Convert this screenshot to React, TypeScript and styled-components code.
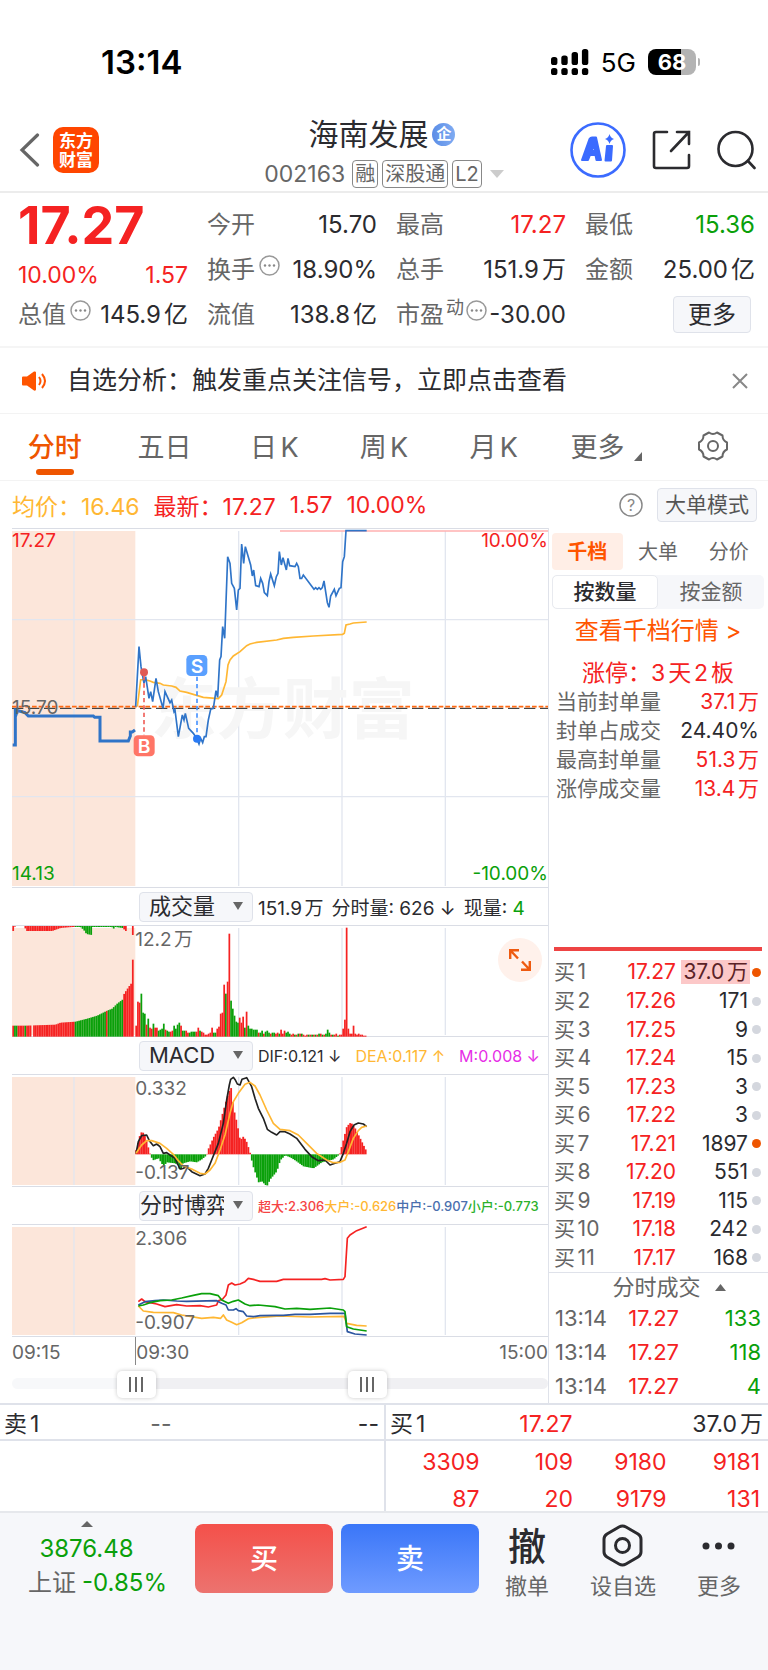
import React, { useState } from "react";
import styled, { createGlobalStyle } from "styled-components";

const C = {
  red: "#f52222",
  green: "#0aa00a",
  dark: "#2b2b2f",
  grey: "#666",
  orange: "#ff5500",
  amber: "#ffb733",
  line: "#dfe2ea",
  panel: "#f6f7fa",
  grid: "#e2e6ef",
  pre: "#fce6da",
  blue: "#2f74c8",
};

const Global = createGlobalStyle`
  *, *::before, *::after { box-sizing: border-box; }
  body {
    margin: 0;
    background: #fff;
    color: ${C.dark};
    font-family: Inter, "Noto Sans CJK SC", sans-serif;
    text-autospace: normal;
  }
  button, select, input { font: inherit; color: inherit; text-autospace: inherit; }
  button { border: 0; padding: 0; margin: 0; background: none; cursor: pointer; }
  a { color: inherit; text-decoration: none; }
  svg { display: block; flex: none; }
  table { border-collapse: collapse; border-spacing: 0; }
  td, th { padding: 0; font-weight: 400; }
`;

/* ---------- status bar and header ---------- */

const StatusBar = styled.div`
  display: flex;
  align-items: center;
  justify-content: space-between;
  height: 108px;
  padding: 16px 68px 0 101px;
`;
const Clock = styled.span`
  font-size: 33px;
  font-weight: 600;
  color: #000;
`;
const StatusRight = styled.div`
  display: flex;
  align-items: center;
  gap: 12px;
  color: #000;
`;
const Network = styled.span`
  font-size: 26px;
`;
const Battery = styled.div`
  display: flex;
  align-items: center;
  gap: 2px;
`;
const BatteryCell = styled.div`
  display: flex;
  align-items: center;
  justify-content: center;
  width: 48px;
  height: 26px;
  border-radius: 8px;
  background: linear-gradient(90deg, #000 68%, #b3b3b3 68%);
  color: #fff;
  font-size: 22px;
  font-weight: 700;
`;
const BatteryTip = styled.i`
  width: 2px;
  height: 8px;
  border-radius: 0 2px 2px 0;
  background: #b3b3b3;
`;

const Header = styled.header`
  display: grid;
  grid-template-columns: 1fr auto 1fr;
  align-items: center;
  height: 85px;
  padding: 0 12px;
  border-bottom: 2px solid #ececec;
`;
const HeaderSide = styled.div<{ $end?: boolean }>`
  display: flex;
  align-items: center;
  justify-content: ${(p) => (p.$end ? "flex-end" : "flex-start")};
  gap: ${(p) => (p.$end ? "26px" : "13px")};
  padding-left: ${(p) => (p.$end ? "0" : "7px")};
`;
const TitleBlock = styled.div`
  display: flex;
  flex-direction: column;
  align-items: center;
  padding-top: 7px;
`;
const TitleRow = styled.h1`
  display: flex;
  align-items: center;
  gap: 4px;
  margin: 0 0 4px;
  padding-right: 4px;
  font-size: 30px;
  line-height: 38px;
  font-weight: 400;
`;
const CompanyBadge = styled.span`
  display: flex;
  align-items: center;
  justify-content: center;
  width: 23px;
  height: 23px;
  border-radius: 50%;
  background: linear-gradient(90deg, #5b8de6, #7fabf2);
  color: #fff;
  font-size: 15px;
  font-weight: 700;
`;
const CodeRow = styled.div`
  display: flex;
  align-items: center;
  gap: 4px;
  height: 34px;
  font-size: 23px;
  color: ${C.grey};
`;
const Code = styled.span`
  margin-right: 3px;
`;
const Tag = styled.span`
  height: 28px;
  padding: 0 2px;
  border: 1px solid #888;
  border-radius: 4px;
  font-size: 20px;
  line-height: 26px;
`;

/* ---------- quote summary ---------- */

const Quote = styled.section`
  display: grid;
  grid-template-columns: repeat(4, minmax(0, 1fr));
  grid-auto-rows: 45px;
  column-gap: 19px;
  padding: 9px 13px 9px 18px;
  border-bottom: 2px solid #f5f5f5;
`;
const PriceCell = styled.div`
  grid-row: span 2;
  display: flex;
  flex-direction: column;
  color: ${C.red};
`;
const LastPrice = styled.strong`
  font-size: 52px;
  line-height: 48px;
  font-weight: 700;
`;
const ChangeRow = styled.div`
  display: flex;
  align-items: center;
  justify-content: space-between;
  height: 42px;
  padding-top: 8px;
  font-size: 23px;
`;
const Cell = styled.div`
  display: flex;
  align-items: center;
  justify-content: space-between;
  font-size: 24px;
  line-height: 32px;
  white-space: nowrap;
`;
const CellLabel = styled.span`
  display: flex;
  align-items: center;
  gap: 4px;
  color: ${C.grey};
`;
const Sup = styled.small`
  align-self: flex-start;
  font-size: 18px;
  line-height: 18px;
  margin: 0 -2px;
`;
const Value = styled.span<{ $color?: string }>`
  color: ${(p) => p.$color ?? C.dark};
`;
const OutlineButton = styled.button<{ $size: number }>`
  height: ${(p) => (p.$size > 22 ? 37 : 34)}px;
  padding: 0 ${(p) => (p.$size > 22 ? 14 : 7)}px;
  border: 1px solid #dfe2ea;
  border-radius: 4px;
  background: ${C.panel};
  color: ${(p) => (p.$size > 22 ? C.dark : "#555")};
  font-size: ${(p) => p.$size}px;
  line-height: 30px;
  white-space: nowrap;
`;
const MoreCell = styled(Cell)`
  justify-content: flex-end;
  padding-right: 4px;
`;

/* ---------- notice, tabs, info row ---------- */

const Notice = styled.section`
  display: flex;
  align-items: center;
  gap: 20px;
  height: 66px;
  padding: 0 20px 0 22px;
  border-bottom: 1px solid #f3f3f3;
  font-size: 25px;
`;
const NoticeText = styled.span`
  flex: 1;
  min-width: 0;
  padding-bottom: 5px;
`;
const Tabs = styled.nav`
  display: grid;
  grid-template-columns: repeat(7, 1fr);
  height: 67px;
  border-bottom: 1px solid #f3f3f3;
`;
const Tab = styled.button<{ $on?: boolean }>`
  position: relative;
  display: flex;
  align-items: center;
  justify-content: center;
  gap: 10px;
  padding-bottom: 3px;
  color: ${(p) => (p.$on ? "#ee5500" : C.grey)};
  font-size: 27px;
  font-weight: ${(p) => (p.$on ? 500 : 400)};
  white-space: nowrap;
  &::after {
    content: "";
    display: ${(p) => (p.$on ? "block" : "none")};
    position: absolute;
    left: calc(50% - 19px);
    bottom: 5px;
    width: 38px;
    height: 6px;
    border-radius: 3px;
    background: #ee5500;
  }
`;
const MoreTab = styled(Tab)`
  padding-left: 6px;
`;
const TabCorner = styled.i`
  align-self: flex-end;
  margin-bottom: 16px;
  border-left: 8px solid transparent;
  border-bottom: 9px solid ${C.grey};
`;
const InfoRow = styled.div`
  display: flex;
  align-items: center;
  gap: 14px;
  height: 47px;
  margin: 0 11px 0 12px;
  font-size: 23px;
  color: ${C.red};
  white-space: nowrap;
`;
const InfoPair = styled.span<{ $color: string }>`
  color: ${(p) => p.$color};
`;
const Spacer = styled.span`
  flex: 1;
`;

/* ---------- charts ---------- */

const Main = styled.main`
  display: grid;
  grid-template-columns: minmax(0, 1fr) 219px;
`;
const Charts = styled.section`
  padding-left: 12px;
  border-right: 1px solid ${C.line};
`;
const Plot = styled.div`
  position: relative;
`;
const PlotSvg = styled.svg`
  width: 100%;
  height: auto;
`;
const PlotLabel = styled.span<{ $side: "left" | "right" | "open"; $top: string; $color?: string }>`
  position: absolute;
  top: ${(p) => p.$top};
  ${(p) => (p.$side === "right" ? "right: 0" : p.$side === "open" ? "left: 23%" : "left: 0")};
  color: ${(p) => p.$color ?? C.grey};
  font-size: 19px;
  line-height: 22px;
`;
const Legend = styled.div`
  display: flex;
  align-items: center;
  gap: 5px;
  height: 37px;
  padding-left: 127px;
  white-space: nowrap;
  overflow: hidden;
`;
const LegendText = styled.span<{ $size: number; $gap: number }>`
  display: flex;
  gap: ${(p) => p.$gap}px;
  font-size: ${(p) => p.$size}px;
  font-weight: ${(p) => (p.$size < 14 ? 500 : 400)};
`;
const SelectBox = styled.label`
  position: relative;
  flex: none;
  width: 114px;
  height: 30px;
  svg {
    position: absolute;
    right: 10px;
    top: 10px;
    pointer-events: none;
  }
`;
const Select = styled.select`
  appearance: none;
  width: 100%;
  height: 100%;
  padding: 0 28px 2px 0;
  border: 1px solid ${C.line};
  border-radius: 4px;
  background: ${C.panel};
  font-size: 22px;
  line-height: 26px;
  text-align: center;
  text-align-last: center;
`;
const ExpandButton = styled.button`
  position: absolute;
  right: 6px;
  top: 13px;
  display: flex;
  align-items: center;
  justify-content: center;
  width: 44px;
  height: 44px;
  border-radius: 50%;
  background: #fff1eb;
`;
const TimeAxis = styled.div`
  display: flex;
  height: 28px;
  color: ${C.grey};
  font-size: 19px;
  line-height: 31px;
`;
const TimeStart = styled.span`
  width: 23%;
`;
const TimeOpen = styled.span`
  flex: 1;
  border-left: 1px solid #888;
`;
const RangeBox = styled.div`
  position: relative;
  height: 38px;
  &::before {
    content: "";
    position: absolute;
    inset: 13px 0 14px;
    border-radius: 6px;
    background: linear-gradient(90deg, #f7f8fa 23%, #f0f0f3 23%);
  }
`;
const RangeInput = styled.input`
  appearance: none;
  position: absolute;
  inset: 5px 0 5px;
  width: 100%;
  height: 28px;
  margin: 0;
  background: transparent;
  pointer-events: none;
  &::-webkit-slider-thumb {
    appearance: none;
    pointer-events: auto;
    width: 39px;
    height: 27px;
    border: 0;
    border-radius: 5px;
    box-shadow: 0 0 4px rgba(0, 0, 0, 0.22);
    background:
      linear-gradient(#666, #666) 12px 6px / 2px 15px no-repeat,
      linear-gradient(#666, #666) 18px 6px / 2px 15px no-repeat,
      linear-gradient(#666, #666) 24px 6px / 2px 15px no-repeat,
      #fff;
  }
`;

/* ---------- order book side ---------- */

const Side = styled.aside`
  display: flex;
  flex-direction: column;
  min-width: 0;
`;
const SideTop = styled.div`
  height: 419px;
  padding: 5px 4px 0 3px;
`;
const SideTabs = styled.div`
  display: grid;
  grid-template-columns: repeat(3, 1fr);
  height: 37px;
`;
const SideTab = styled.button<{ $on?: boolean }>`
  padding-bottom: 2px;
  border-radius: 4px;
  background: ${(p) => (p.$on ? "#ffeee6" : "transparent")};
  color: ${(p) => (p.$on ? C.orange : C.grey)};
  font-size: 20px;
  font-weight: ${(p) => (p.$on ? 700 : 400)};
`;
const Segments = styled.div`
  display: grid;
  grid-template-columns: 1fr 1fr;
  height: 34px;
  margin-top: 5px;
  border-radius: 5px;
  background: ${C.panel};
`;
const Segment = styled.button<{ $on?: boolean }>`
  border: 1px solid ${(p) => (p.$on ? "#e8eaef" : "transparent")};
  border-radius: 5px;
  background: ${(p) => (p.$on ? "#fff" : "transparent")};
  color: ${(p) => (p.$on ? C.dark : C.grey)};
  font-size: 21px;
  line-height: 30px;
  font-weight: ${(p) => (p.$on ? 500 : 400)};
`;
const DepthLink = styled.a`
  display: block;
  height: 44px;
  color: ${C.orange};
  font-size: 24px;
  line-height: 44px;
  text-align: center;
`;
const LimitTitle = styled.div`
  height: 33px;
  margin-top: 3px;
  color: ${C.red};
  font-size: 23px;
  line-height: 35px;
  text-align: center;
`;
const StatRow = styled.div`
  display: flex;
  justify-content: space-between;
  height: 29px;
  padding: 0 5px 0 4px;
  font-size: 21px;
  line-height: 26px;
  color: ${C.grey};
  white-space: nowrap;
`;
const BookTable = styled.table`
  width: 208px;
  height: 325px;
  margin-left: 5px;
  border-top: 4px solid #ee4444;
  font-size: 21px;
  line-height: 24px;
  table-layout: fixed;
  tr:first-child > * {
    padding-top: 6px;
  }
`;
const BookLevel = styled.th`
  width: 56px;
  text-align: left;
  color: ${C.grey};
`;
const BookPrice = styled.td`
  width: 66px;
  text-align: right;
  color: ${C.red};
`;
const BookVolume = styled.td`
  text-align: right;
`;
const Highlight = styled.span<{ $on: boolean }>`
  display: inline-block;
  height: 24px;
  padding: 0 2px;
  background: ${(p) => (p.$on ? "#fcc8c8" : "transparent")};
  color: ${(p) => (p.$on ? "#5a2226" : C.dark)};
  white-space: nowrap;
`;
const DotCell = styled.td`
  width: 12px;
`;
const Dot = styled.i<{ $on: boolean }>`
  display: block;
  width: 9px;
  height: 9px;
  margin-left: 2px;
  border-radius: 50%;
  background: ${(p) => (p.$on ? "#ee5500" : "#d4d7de")};
`;
const Deals = styled.div`
  padding: 0 7px 0 6px;
  border-top: 1px solid ${C.line};
`;
const DealsHead = styled.button`
  display: flex;
  align-items: center;
  justify-content: center;
  gap: 14px;
  width: 100%;
  height: 28px;
  padding-left: 22px;
  color: ${C.grey};
  font-size: 22px;
  line-height: 28px;
`;
const DealRow = styled.div`
  display: grid;
  grid-template-columns: 56px 68px 1fr;
  height: 34px;
  font-size: 22px;
  line-height: 34px;
  text-align: right;
`;
const DealTime = styled.span`
  color: ${C.grey};
  text-align: left;
`;

/* ---------- queue strip ---------- */

const Queue = styled.section`
  display: grid;
  grid-template-columns: 1fr 1fr;
  border-top: 2px solid ${C.line};
  border-bottom: 2px solid #e6e8ec;
  font-size: 23px;
`;
const QueueSide = styled.div<{ $right?: boolean }>`
  border-left: ${(p) => (p.$right ? `2px solid ${C.line}` : "0")};
`;
const QueueHead = styled.div`
  display: grid;
  grid-template-columns: 1fr 1fr 2fr;
  height: 36px;
  padding: 0 5px 0 4px;
  border-bottom: 2px solid ${C.line};
  line-height: 38px;
  white-space: nowrap;
`;
const QueueItem = styled.span<{ $align?: "left"; $color?: string; $inset?: number }>`
  padding-right: ${(p) => p.$inset ?? 0}px;
  text-align: ${(p) => p.$align ?? "right"};
  color: ${(p) => p.$color ?? C.dark};
`;
const QueueGrid = styled.div`
  display: grid;
  grid-template-columns: repeat(4, 1fr);
  grid-auto-rows: 24px;
  row-gap: 13px;
  padding: 9px 8px 0 0;
  color: ${C.red};
  line-height: 24px;
  text-align: right;
`;

/* ---------- bottom bar ---------- */

const BottomBar = styled.footer`
  display: grid;
  grid-template-columns: 187px 138px 138px 1fr;
  column-gap: 8px;
  height: 158px;
  padding-top: 11px;
  background: ${C.panel};
`;
const IndexBox = styled.button`
  display: flex;
  flex-direction: column;
  align-items: center;
  justify-self: stretch;
  height: 80px;
  padding-left: 8px;
  margin-top: -3px;
  color: ${C.green};
  font-size: 24px;
  line-height: 34px;
`;
const IndexArrow = styled.i`
  margin: 0 22px 5px 0;
  border: 6px solid transparent;
  border-top: 0;
  border-bottom: 6px solid ${C.grey};
`;
const IndexValue = styled.span`
  margin-right: 22px;
`;
const IndexName = styled.span`
  color: ${C.grey};
  margin-right: 6px;
`;
const TradeButton = styled.button<{ $buy?: boolean }>`
  height: 69px;
  padding-bottom: 3px;
  border-radius: 8px;
  background: ${(p) =>
    p.$buy ? "linear-gradient(#f4504a, #ec736f)" : "linear-gradient(#3a76f8, #6f9bff)"};
  color: #fff;
  font-size: 28px;
  font-weight: 500;
`;
const Actions = styled.div`
  display: flex;
  justify-content: space-between;
  padding: 0 27px 0 18px;
`;
const Action = styled.button`
  display: flex;
  flex-direction: column;
  align-items: center;
  gap: 4px;
  height: 80px;
  font-size: 22px;
  line-height: 30px;
  color: ${C.grey};
`;
const ActionIcon = styled.span`
  display: flex;
  align-items: center;
  height: 43px;
  font-size: 38px;
  font-weight: 500;
  line-height: 38px;
  color: ${C.dark};
`;

/* ---------- icons ---------- */

const SignalIcon = () => (
  <svg width="38" height="26" viewBox="0 0 38 26" fill="#000">
    {[8, 6.5, 3, 0].map((y, i) => (
      <g key={y}>
        <rect x={i * 10.3} y={y} width="6.400" height={16 - y} rx="2.600" />
        <rect x={i * 10.3} y="19" width="6.400" height="7" rx="2.600" />
      </g>
    ))}
  </svg>
);
const BackIcon = () => (
  <svg width="21" height="34" viewBox="0 0 21 34" fill="none" stroke="#666" strokeWidth="3.200" strokeLinecap="round">
    <path d="M18.500 2 3 17l15.500 15" />
  </svg>
);
const BrandIcon = () => (
  <svg width="46" height="46" viewBox="0 0 46 46">
    <rect width="46" height="46" rx="10" fill="#ff4600" />
    <g fill="#fff" fontSize="17" fontWeight="700" textAnchor="middle">
      <text x="23" y="20">东方</text>
      <text x="23" y="39">财富</text>
    </g>
  </svg>
);
const AiIcon = () => (
  <svg width="56" height="56" viewBox="0 0 56 56" fill="#3b6bff">
    <circle cx="28" cy="28" r="26.500" fill="#fff" stroke="#3b6bff" strokeWidth="2.600" />
    <g stroke="#3b6bff" strokeWidth="2" strokeLinejoin="round">
      <path
        fillRule="evenodd"
        d="M12 38 19.500 17q1-1.500 2.500-1.500h4L31 38h-4.500l-1-5h-5.500l-2 5zM21.500 29h3.500l-1-6z"
      />
      <path d="M37 24h5l-1 14.500h-5.500z" />
    </g>
    <path d="M39.500 12q1 4 4.500 5-3.500 1-4.500 5-1-4-4.500-5 3.500-1 4.500-5z" />
  </svg>
);
const ShareIcon = () => (
  <svg width="39" height="40" viewBox="0 0 39 40" fill="none" stroke="#2b2b2f" strokeWidth="2.600" strokeLinecap="round">
    <path d="M15 2H4q-2 0-2 2v32q0 2 2 2h31q2 0 2-2V25M25 2h12v12M37 2 19 21" />
  </svg>
);
const SearchIcon = () => (
  <svg width="39" height="40" viewBox="0 0 39 40" fill="none" stroke="#2b2b2f" strokeWidth="2.600" strokeLinecap="round">
    <circle cx="18.500" cy="19" r="17" />
    <path d="m31 31 6.500 7" />
  </svg>
);
const InfoDots = () => (
  <svg width="21" height="30" viewBox="0 0 21 30">
    <circle cx="10.500" cy="10.500" r="9.500" fill="none" stroke="#999" strokeWidth="1.500" />
    <g fill="#888">
      <circle cx="6" cy="10.500" r="1.200" />
      <circle cx="10.500" cy="10.500" r="1.200" />
      <circle cx="15" cy="10.500" r="1.200" />
    </g>
  </svg>
);
const SpeakerIcon = () => (
  <svg width="25" height="20" viewBox="0 0 25 20">
    <path d="M1 5.500h4L12 .5q2-.5 2 1v17q0 1.500-2 1l-7-5H1q-1 0-1-1v-7q0-1 1-1z" fill={C.orange} />
    <path d="M17 6q3 4 0 8M20 3q6 7 0 14" fill="none" stroke={C.orange} strokeWidth="2" />
  </svg>
);
const CloseIcon = () => (
  <svg width="16" height="16" viewBox="0 0 16 16" stroke="#888" strokeWidth="2">
    <path d="m1 1 14 14M15 1 1 15" />
  </svg>
);
const GearIcon = () => (
  <svg width="32" height="30" viewBox="0 0 32 30" fill="none" stroke="#666" strokeWidth="2" strokeLinejoin="round">
    <path d="M12 1.500q4 3 8 0l5.500 3q0 5 4.500 7v7q-4.500 2-4.500 7l-5.500 3q-4-3-8 0l-5.500-3q0-5-4.500-7v-7q4.500-2 4.500-7z" />
    <circle cx="16" cy="15" r="5" />
  </svg>
);
const HelpIcon = () => (
  <svg width="24" height="24" viewBox="0 0 24 24">
    <circle cx="12" cy="12" r="11" fill="none" stroke="#888" strokeWidth="1.500" />
    <text x="12" y="18" fill="#888" fontSize="16" textAnchor="middle">?</text>
  </svg>
);
const DownIcon = ({ color = "#666", w = 10 }: { color?: string; w?: number }) => (
  <svg width={w} height="8" viewBox="0 0 10 8" preserveAspectRatio="none" fill={color}>
    <path d="M0 0h10L5 8z" />
  </svg>
);
const UpIcon = () => (
  <svg width="11" height="7" viewBox="0 0 11 7" fill="#666">
    <path d="M0 7h11L5.500 0z" />
  </svg>
);
const ExpandIcon = () => (
  <svg width="22" height="22" viewBox="0 0 22 22" fill="none" stroke="#ee5a10" strokeWidth="2.400">
    <path d="M1.200 10V1.200H10M1.500 1.500l7.500 8M12 20.800h8.800V12M20.500 20.500l-7.500-8" />
  </svg>
);
const HexIcon = () => (
  <svg width="41" height="43" viewBox="0 0 41 43" fill="none" stroke="#2b2b2f" strokeWidth="3">
    <path d="M17 3q3.500-2 7 0l12 7q3 2 3 5v13q0 3-3 5l-12 7q-3.500 2-7 0L5 33q-3-2-3-5V15q0-3 3-5z" />
    <circle cx="20.500" cy="21.500" r="7" />
  </svg>
);
const DotsIcon = () => (
  <svg width="33" height="8" viewBox="0 0 33 8" fill="#2b2b2f">
    <circle cx="4" cy="4" r="3.500" />
    <circle cx="16.500" cy="4" r="3.500" />
    <circle cx="29" cy="4" r="3.500" />
  </svg>
);

/* ---------- chart data (three drawing units per pixel) ---------- */

const LEFT = 36;
const WIDTH = 1608;
const OPEN = 406;
const STEP = 5.175;
const GRID_X = [222, 716, 1026, 1336];

const PRE_PRICE =
  "38,675 46,675 46,565 46,590 52,572 75,578 85,588 280,588 284,592 300,592 300,663 385,663 391,648 391,636 397,636 405,630";
const PRICE =
  "407,560 417,380 423,440 432,490 437,470 447,535 452,515 458,545 468,475 475,515 489,565 495,515 510,548 515,540 522,575 525,570 535,650 547,585 552,600 556,580 566,625 580,640 590,655 597,672 602,655 608,668 613,650 618,650 625,600 632,568 640,565 648,512 653,532 659,420 663,410 668,320 674,355 683,110 690,130 695,190 703,205 710,270 715,210 720,205 725,72 731,130 736,80 752,135 757,168 761,150 767,197 777,200 782,175 788,190 793,218 802,227 807,185 812,162 823,197 829,170 834,160 838,95 844,135 849,113 859,150 864,115 869,137 885,140 890,130 895,140 900,175 905,175 910,165 942,208 947,203 952,208 957,203 962,208 967,203 972,183 982,248 987,262 992,228 1003,208 1008,227 1018,205 1023,203 1028,125 1033,110 1038,32 1100,32";
const AVERAGE =
  "412,560 422,480 432,478 450,483 460,487 480,490 490,495 515,498 528,502 540,513 560,517 590,526 610,532 655,536 665,525 678,485 684,435 690,420 700,408 720,395 740,377 750,372 770,367 830,360 850,355 880,352 940,348 1028,343 1033,340 1038,315 1050,312 1060,309 1100,306";

/* Minute volumes; a minus sign marks a falling minute. */
const VOLUME: number[] = [
  11, 35, 34, -43, -24, -23, 12, -18, 9, 8, -13, 9, 9, -6, -7, -8, -13, 7, -6, -5, 5, 6, -11, -8, -12, -14, 11, -6, -6,
  6, 4, -4, -5, -5, -5, 5, 9, -6, 5, 4, 2, 2, 3, 4, 9, -4, -4, 8, 10, 23, 24, 52, -43, 55, 103, -36, -28, -21, -15, -14,
  19, 14, 20, -9, 25, -11, -8, -8, -7, -7, -7, 4, -4, -6, 3, -5, -6, -4, 3, -4, -4, 3, 4, -3, 7, 3, 6, -4, -5, -3, 2, 3,
  -2, 2, -3, 3, -3, 2, 1, 2, -2, 2, -2, 2, -2, 2, -3, 3, -2, 2, -3, -7, -4, 2, -2, 2, 3, -1, 2, 2, 8, 17, 109, 8, 3,
  3, 11, 3, 2, 3, 2, 2, 1, 1,
];

type Key = [number, number];
/* Reads a value at x from a list of key points by straight lines. */
const at = (keys: Key[], x: number): number => {
  const i = keys.findIndex((k) => k[0] >= x);
  if (i <= 0) return keys[i === 0 ? 0 : keys.length - 1][1];
  const [x0, y0] = keys[i - 1];
  const [x1, y1] = keys[i];
  return y0 + ((y1 - y0) * (x - x0)) / (x1 - x0);
};
const PRE_VOLUME: Key[] = [
  [38, 11], [75, 11], [165, 12], [180, 14], [225, 15], [260, 18], [290, 21], [320, 26], [335, 28], [350, 33], [366, 37],
  [371, 43], [385, 50], [394, 54], [396, 77],
];
const PRE_TOP: Key[] = [
  [38, 5], [44, 0], [72, 0], [77, 5], [155, 5], [180, 2], [218, 1], [240, 1], [250, 4], [258, 8], [274, 9], [276, 1],
  [334, 1], [338, 3], [345, 1], [366, 2], [376, 5], [381, 0], [392, 0], [396, 9],
];
const HISTOGRAM: Key[] = [
  [407, 3], [418, 18], [425, 23], [433, 20], [440, 12], [450, 0], [458, -6], [475, -4], [490, -12], [500, -8],
  [525, -9], [535, -11], [540, -18], [548, -9], [570, -7], [590, -8], [605, -5], [619, -1], [624, 5], [640, 17],
  [655, 26], [668, 42], [680, 56], [692, 68], [700, 46], [710, 32], [720, 14], [730, 18], [740, 12], [751, 0],
  [757, -10], [775, -28], [785, -27], [800, -32], [810, -25], [830, -17], [840, -6], [855, -1], [870, -3], [885, -6],
  [910, -12], [940, -14], [965, -8], [1000, -5], [1018, 0], [1030, 15], [1040, 28], [1052, 32], [1065, 26], [1080, 16],
  [1102, 1],
];

const DIF =
  "408,820 415,785 425,767 440,765 448,782 460,797 470,792 480,800 490,820 500,818 510,825 525,835 540,867 550,865 560,860 575,875 600,887 615,882 625,865 635,840 655,790 670,730 680,660 688,615 692,598 700,592 706,600 712,612 720,615 726,598 740,593 748,607 755,620 765,655 775,685 790,715 802,748 815,757 830,765 840,755 855,755 870,762 890,775 915,808 935,830 955,842 975,840 990,855 1005,850 1020,845 1030,820 1040,790 1050,755 1062,735 1075,729 1090,732 1100,740";
const DEA =
  "408,820 425,795 440,782 455,782 480,790 500,805 520,823 535,842 550,858 575,867 600,880 615,882 630,870 645,850 660,810 675,765 690,700 700,665 715,640 735,613 750,607 765,618 780,645 800,690 820,730 840,748 870,752 895,765 920,790 950,820 980,840 1000,848 1020,847 1035,840 1045,815 1060,775 1075,752 1085,742 1100,738";

const PLAYERS: [string, string][] = [
  [
    "#f52222",
    "415,365 425,357 435,365 450,368 470,372 495,380 530,374 560,378 600,377 625,381 650,375 655,362 668,357 678,345 685,315 695,309 705,315 720,312 735,305 745,295 760,298 780,304 830,304 850,298 965,298 975,296 990,300 1030,298 1035,290 1038,240 1042,175 1050,165 1070,152 1100,140",
  ],
  [
    "#ffb733",
    "415,378 430,393 460,397 520,398 545,405 605,415 640,412 662,415 670,405 680,420 695,427 710,434 725,428 745,416 770,413 840,408 930,411 1032,409 1040,430 1070,436 1100,438",
  ],
  [
    "#2c56a0",
    "415,375 435,365 465,362 490,360 530,363 560,364 650,362 665,370 678,375 685,390 700,390 708,386 715,392 730,395 740,408 760,410 780,407 830,406 850,406 885,403 930,403 990,400 1035,400 1042,455 1065,462 1100,465",
  ],
  [
    "#0aa00a",
    "415,378 430,375 450,368 480,362 515,360 545,354 580,346 605,341 630,341 655,347 665,360 685,370 700,364 715,360 735,372 750,377 775,375 825,380 855,387 890,385 930,388 990,384 1030,390 1035,395 1040,440 1060,447 1100,453",
  ],
];

interface FrameProps {
  top: number;
  height: number;
  children: React.ReactNode;
  rows?: number[];
}
/* Shared backdrop: pre-open shading, grid and the outer rules. */
const Frame = ({ top, height, rows = [], children }: FrameProps) => (
  <PlotSvg viewBox={`${LEFT} ${top} ${WIDTH} ${height}`}>
    <rect x={LEFT} y={top + 9} width={OPEN - LEFT} height={height - 15} fill={C.pre} />
    <g stroke={C.grid} strokeWidth="4">
      {GRID_X.map((x) => (
        <path key={x} d={`M${x} ${top + 9}v${height - 15}`} />
      ))}
      {rows.map((y) => (
        <path key={y} d={`M${LEFT} ${y}h${WIDTH}`} />
      ))}
    </g>
    <path
      d={`M${LEFT} ${top + 1.5}h${WIDTH}M${LEFT} ${top + height - 1.5}h${WIDTH}`}
      stroke="#dadde5"
      strokeWidth="3"
    />
    {children}
  </PlotSvg>
);

const PriceChart = () => (
  <Plot>
    <Frame top={24} height={1080} rows={[299, 830]}>
      <text
        x="848"
        y="638"
        fill="#f6f6f6"
        fontSize="198"
        fontWeight="700"
        textAnchor="middle"
        fontFamily='"Noto Sans CJK SC", sans-serif'
      >
        东方财富
      </text>
      <path d="M840 33H1644" stroke="#ffb0b0" strokeWidth="4" />
      <path d="M36 565H1644" stroke="#444" strokeWidth="4" strokeDasharray="34 14" />
      <path d="M36 560H1644" stroke="#ff6a13" strokeWidth="5" strokeDasharray="14 6" />
      <polyline points={PRE_PRICE} fill="none" stroke={C.blue} strokeWidth="9" />
      <polyline points={AVERAGE} fill="none" stroke={C.amber} strokeWidth="5" />
      <polyline points={PRICE} fill="none" stroke={C.blue} strokeWidth="5" />
      <g strokeWidth="5" strokeDasharray="13 9">
        <path d="M432 468V646" stroke="#f0625c" />
        <path d="M591 470V646" stroke="#4a94ff" />
      </g>
      <circle cx="432" cy="457" r="12" fill="#e05a55" />
      <circle cx="591" cy="656" r="12" fill="#2a7bf5" />
      <rect x="401" y="646" width="63" height="63" rx="13" fill="#ff7566" />
      <rect x="559" y="405" width="63" height="63" rx="13" fill="#5aa0ff" />
      <g fill="#fff" fontSize="58" fontWeight="600" textAnchor="middle">
        <text x="432" y="699">B</text>
        <text x="591" y="458">S</text>
      </g>
    </Frame>
    <PlotLabel $side="left" $top="2px" $color={C.red}>17.27</PlotLabel>
    <PlotLabel $side="right" $top="2px" $color={C.red}>10.00%</PlotLabel>
    <PlotLabel $side="left" $top="47%">15.70</PlotLabel>
    <PlotLabel $side="left" $top="93%" $color={C.green}>14.13</PlotLabel>
    <PlotLabel $side="right" $top="93%" $color={C.green}>-10.00%</PlotLabel>
  </Plot>
);

const preBars = Array.from({ length: 70 }, (_, i) => 38 + i * 5.2);
const isFallingPre = (x: number, i: number) => (x > 225 && x < 368 && Math.abs(x - 317) > 2.6) || [1, 2, 7].includes(i);

const VolumeChart = () => (
  <Plot>
    <Frame top={135} height={336}>
      {preBars.map((x, i) => {
        const h = at(PRE_VOLUME, x) * 3;
        const t = at(PRE_TOP, x) * 3;
        const topFalling = x > 225 && x < 368;
        return (
          <g key={x}>
            {Math.abs(x - 95) > 2.6 && (
              <rect x={x - 1} y={470 - h} width="5.200" height={h} fill={isFallingPre(x, i) ? C.green : C.red} />
            )}
            <rect x={x - 1} y="138" width="5.200" height={t} fill={topFalling ? C.green : C.red} />
          </g>
        );
      })}
      {VOLUME.map((v, i) => (
        <rect
          key={i}
          x={OPEN + i * STEP}
          y={470 - Math.abs(v) * 3}
          width={STEP}
          height={Math.abs(v) * 3}
          fill={v > 0 ? C.red : C.green}
        />
      ))}
    </Frame>
    <PlotLabel $side="open" $top="4px">12.2万</PlotLabel>
    <ExpandButton aria-label="全屏">
      <ExpandIcon />
    </ExpandButton>
  </Plot>
);

const MacdChart = () => (
  <Plot>
    <Frame top={582} height={339}>
      {VOLUME.map((_, i) => {
        const x = OPEN + i * STEP;
        const v = at(HISTOGRAM, x + 2) * 3;
        return (
          <rect
            key={i}
            x={x}
            y={v > 0 ? 823 - v : 823}
            width="5.500"
            height={Math.max(Math.abs(v), 1)}
            fill={v > 0 ? C.red : C.green}
          />
        );
      })}
      <polyline points={DIF} fill="none" stroke="#222" strokeWidth="5" strokeLinejoin="round" />
      <polyline points={DEA} fill="none" stroke={C.amber} strokeWidth="5" strokeLinejoin="round" />
    </Frame>
    <PlotLabel $side="open" $top="4px">0.332</PlotLabel>
    <PlotLabel $side="open" $top="88px">-0.137</PlotLabel>
  </Plot>
);

const PlayersChart = () => (
  <Plot>
    <Frame top={132} height={339}>
      {PLAYERS.map(([color, points]) => (
        <polyline key={color} points={points} fill="none" stroke={color} strokeWidth="5" strokeLinejoin="round" />
      ))}
    </Frame>
    <PlotLabel $side="open" $top="4px">2.306</PlotLabel>
    <PlotLabel $side="open" $top="88px">-0.907</PlotLabel>
  </Plot>
);

const IndicatorSelect = ({ value }: { value: string }) => (
  <SelectBox>
    <Select aria-label="指标" defaultValue={value}>
      <option>{value}</option>
    </Select>
    <DownIcon />
  </SelectBox>
);

const BOOK: [string, string, string, boolean][] = [
  ["买1", "17.27", "37.0万", true],
  ["买2", "17.26", "171", false],
  ["买3", "17.25", "9", false],
  ["买4", "17.24", "15", false],
  ["买5", "17.23", "3", false],
  ["买6", "17.22", "3", false],
  ["买7", "17.21", "1897", true],
  ["买8", "17.20", "551", false],
  ["买9", "17.19", "115", false],
  ["买10", "17.18", "242", false],
  ["买11", "17.17", "168", false],
];

const STATS: [string, string, string][] = [
  ["当前封单量", "37.1万", C.red],
  ["封单占成交", "24.40%", C.dark],
  ["最高封单量", "51.3万", C.red],
  ["涨停成交量", "13.4万", C.red],
];

const TABS = ["分时", "五日", "日K", "周K", "月K"];

export default function App() {
  const [tab, setTab] = useState("分时");
  return (
    <>
      <Global />
      <StatusBar>
        <Clock>13:14</Clock>
        <StatusRight>
          <SignalIcon />
          <Network>5G</Network>
          <Battery>
            <BatteryCell>68</BatteryCell>
            <BatteryTip />
          </Battery>
        </StatusRight>
      </StatusBar>

      <Header>
        <HeaderSide>
          <button aria-label="返回"><BackIcon /></button>
          <a href="#home" aria-label="东方财富"><BrandIcon /></a>
        </HeaderSide>
        <TitleBlock>
          <TitleRow>
            海南发展
            <CompanyBadge>企</CompanyBadge>
          </TitleRow>
          <CodeRow>
            <Code>002163</Code>
            <Tag>融</Tag>
            <Tag>深股通</Tag>
            <Tag>L2</Tag>
            <Spacer />
            <DownIcon color="#ccc" w={14} />
          </CodeRow>
        </TitleBlock>
        <HeaderSide $end>
          <button aria-label="AI"><AiIcon /></button>
          <button aria-label="分享"><ShareIcon /></button>
          <button aria-label="搜索"><SearchIcon /></button>
        </HeaderSide>
      </Header>

      <Quote>
        <PriceCell>
          <LastPrice>17.27</LastPrice>
          <ChangeRow>
            <span>10.00%</span>
            <span>1.57</span>
          </ChangeRow>
        </PriceCell>
        <Cell><CellLabel>今开</CellLabel><Value>15.70</Value></Cell>
        <Cell><CellLabel>最高</CellLabel><Value $color={C.red}>17.27</Value></Cell>
        <Cell><CellLabel>最低</CellLabel><Value $color={C.green}>15.36</Value></Cell>
        <Cell><CellLabel>换手 <InfoDots /></CellLabel><Value>18.90%</Value></Cell>
        <Cell><CellLabel>总手</CellLabel><Value>151.9万</Value></Cell>
        <Cell><CellLabel>金额</CellLabel><Value>25.00亿</Value></Cell>
        <Cell><CellLabel>总值 <InfoDots /></CellLabel><Value>145.9亿</Value></Cell>
        <Cell><CellLabel>流值</CellLabel><Value>138.8亿</Value></Cell>
        <Cell><CellLabel>市盈<Sup>动</Sup><InfoDots /></CellLabel><Value>-30.00</Value></Cell>
        <MoreCell><OutlineButton $size={24}>更多</OutlineButton></MoreCell>
      </Quote>

      <Notice>
        <SpeakerIcon />
        <NoticeText>自选分析：触发重点关注信号，立即点击查看</NoticeText>
        <button aria-label="关闭"><CloseIcon /></button>
      </Notice>

      <Tabs>
        {TABS.map((name) => (
          <Tab key={name} $on={name === tab} onClick={() => setTab(name)}>{name}</Tab>
        ))}
        <MoreTab>更多<TabCorner /></MoreTab>
        <Tab aria-label="设置"><GearIcon /></Tab>
      </Tabs>

      <InfoRow>
        <InfoPair $color={C.amber}>均价：16.46</InfoPair>
        <InfoPair $color={C.red}>最新：17.27</InfoPair>
        <span>1.57</span>
        <span>10.00%</span>
        <Spacer />
        <button aria-label="帮助"><HelpIcon /></button>
        <OutlineButton $size={21}>大单模式</OutlineButton>
      </InfoRow>

      <Main>
        <Charts>
          <PriceChart />
          <Legend>
            <IndicatorSelect value="成交量" />
            <LegendText $size={19} $gap={8}>
              <span>151.9万</span>
              <span>分时量: 626 ↓</span>
              <span>现量: <Value $color={C.green}>4</Value></span>
            </LegendText>
          </Legend>
          <VolumeChart />
          <Legend>
            <IndicatorSelect value="MACD" />
            <LegendText $size={16} $gap={14}>
              <span>DIF:0.121 ↓</span>
              <Value $color={C.amber}>DEA:0.117 ↑</Value>
              <Value $color="#e62ee6">M:0.008 ↓</Value>
            </LegendText>
          </Legend>
          <MacdChart />
          <Legend>
            <IndicatorSelect value="分时博弈" />
            <LegendText $size={13} $gap={0}>
              <Value $color="#f54444">超大:2.306</Value>
              <Value $color={C.amber}>大户:-0.626</Value>
              <Value $color="#4a6fae">中户:-0.907</Value>
              <Value $color="#2bb02b">小户:-0.773</Value>
            </LegendText>
          </Legend>
          <PlayersChart />
          <TimeAxis>
            <TimeStart>09:15</TimeStart>
            <TimeOpen>09:30</TimeOpen>
            <span>15:00</span>
          </TimeAxis>
          <RangeBox>
            <RangeInput type="range" aria-label="开始时间" min={0} max={497} defaultValue={105} />
            <RangeInput type="range" aria-label="结束时间" min={0} max={497} defaultValue={336} />
          </RangeBox>
        </Charts>

        <Side>
          <SideTop>
            <SideTabs>
              <SideTab $on>千档</SideTab>
              <SideTab>大单</SideTab>
              <SideTab>分价</SideTab>
            </SideTabs>
            <Segments>
              <Segment $on>按数量</Segment>
              <Segment>按金额</Segment>
            </Segments>
            <DepthLink href="#depth">查看千档行情 &gt;</DepthLink>
            <LimitTitle>涨停：3天2板</LimitTitle>
            {STATS.map(([label, value, color]) => (
              <StatRow key={label}>
                <span>{label}</span>
                <Value $color={color}>{value}</Value>
              </StatRow>
            ))}
          </SideTop>
          <BookTable>
            <tbody>
              {BOOK.map(([level, price, volume, on]) => (
                <tr key={level}>
                  <BookLevel scope="row">{level}</BookLevel>
                  <BookPrice>{price}</BookPrice>
                  <BookVolume><Highlight $on={level === "买1"}>{volume}</Highlight></BookVolume>
                  <DotCell><Dot $on={on} /></DotCell>
                </tr>
              ))}
            </tbody>
          </BookTable>
          <Deals>
            <DealsHead>分时成交 <UpIcon /></DealsHead>
            {["133", "118", "4"].map((v) => (
              <DealRow key={v}>
                <DealTime>13:14</DealTime>
                <Value $color={C.red}>17.27</Value>
                <Value $color={C.green}>{v}</Value>
              </DealRow>
            ))}
          </Deals>
        </Side>
      </Main>

      <Queue>
        <QueueSide>
          <QueueHead>
            <QueueItem $align="left">卖1</QueueItem>
            <QueueItem $color={C.grey} $inset={20}>--</QueueItem>
            <QueueItem>--</QueueItem>
          </QueueHead>
        </QueueSide>
        <QueueSide $right>
          <QueueHead>
            <QueueItem $align="left">买1</QueueItem>
            <QueueItem $color={C.red} $inset={4}>17.27</QueueItem>
            <QueueItem>37.0万</QueueItem>
          </QueueHead>
          <QueueGrid>
            {["3309", "109", "9180", "9181", "87", "20", "9179", "131"].map((n) => (
              <span key={n}>{n}</span>
            ))}
          </QueueGrid>
        </QueueSide>
      </Queue>

      <BottomBar>
        <IndexBox>
          <IndexArrow />
          <IndexValue>3876.48</IndexValue>
          <span><IndexName>上证</IndexName>-0.85%</span>
        </IndexBox>
        <TradeButton $buy>买</TradeButton>
        <TradeButton>卖</TradeButton>
        <Actions>
          <Action><ActionIcon>撤</ActionIcon>撤单</Action>
          <Action><ActionIcon><HexIcon /></ActionIcon>设自选</Action>
          <Action><ActionIcon><DotsIcon /></ActionIcon>更多</Action>
        </Actions>
      </BottomBar>
    </>
  );
}
